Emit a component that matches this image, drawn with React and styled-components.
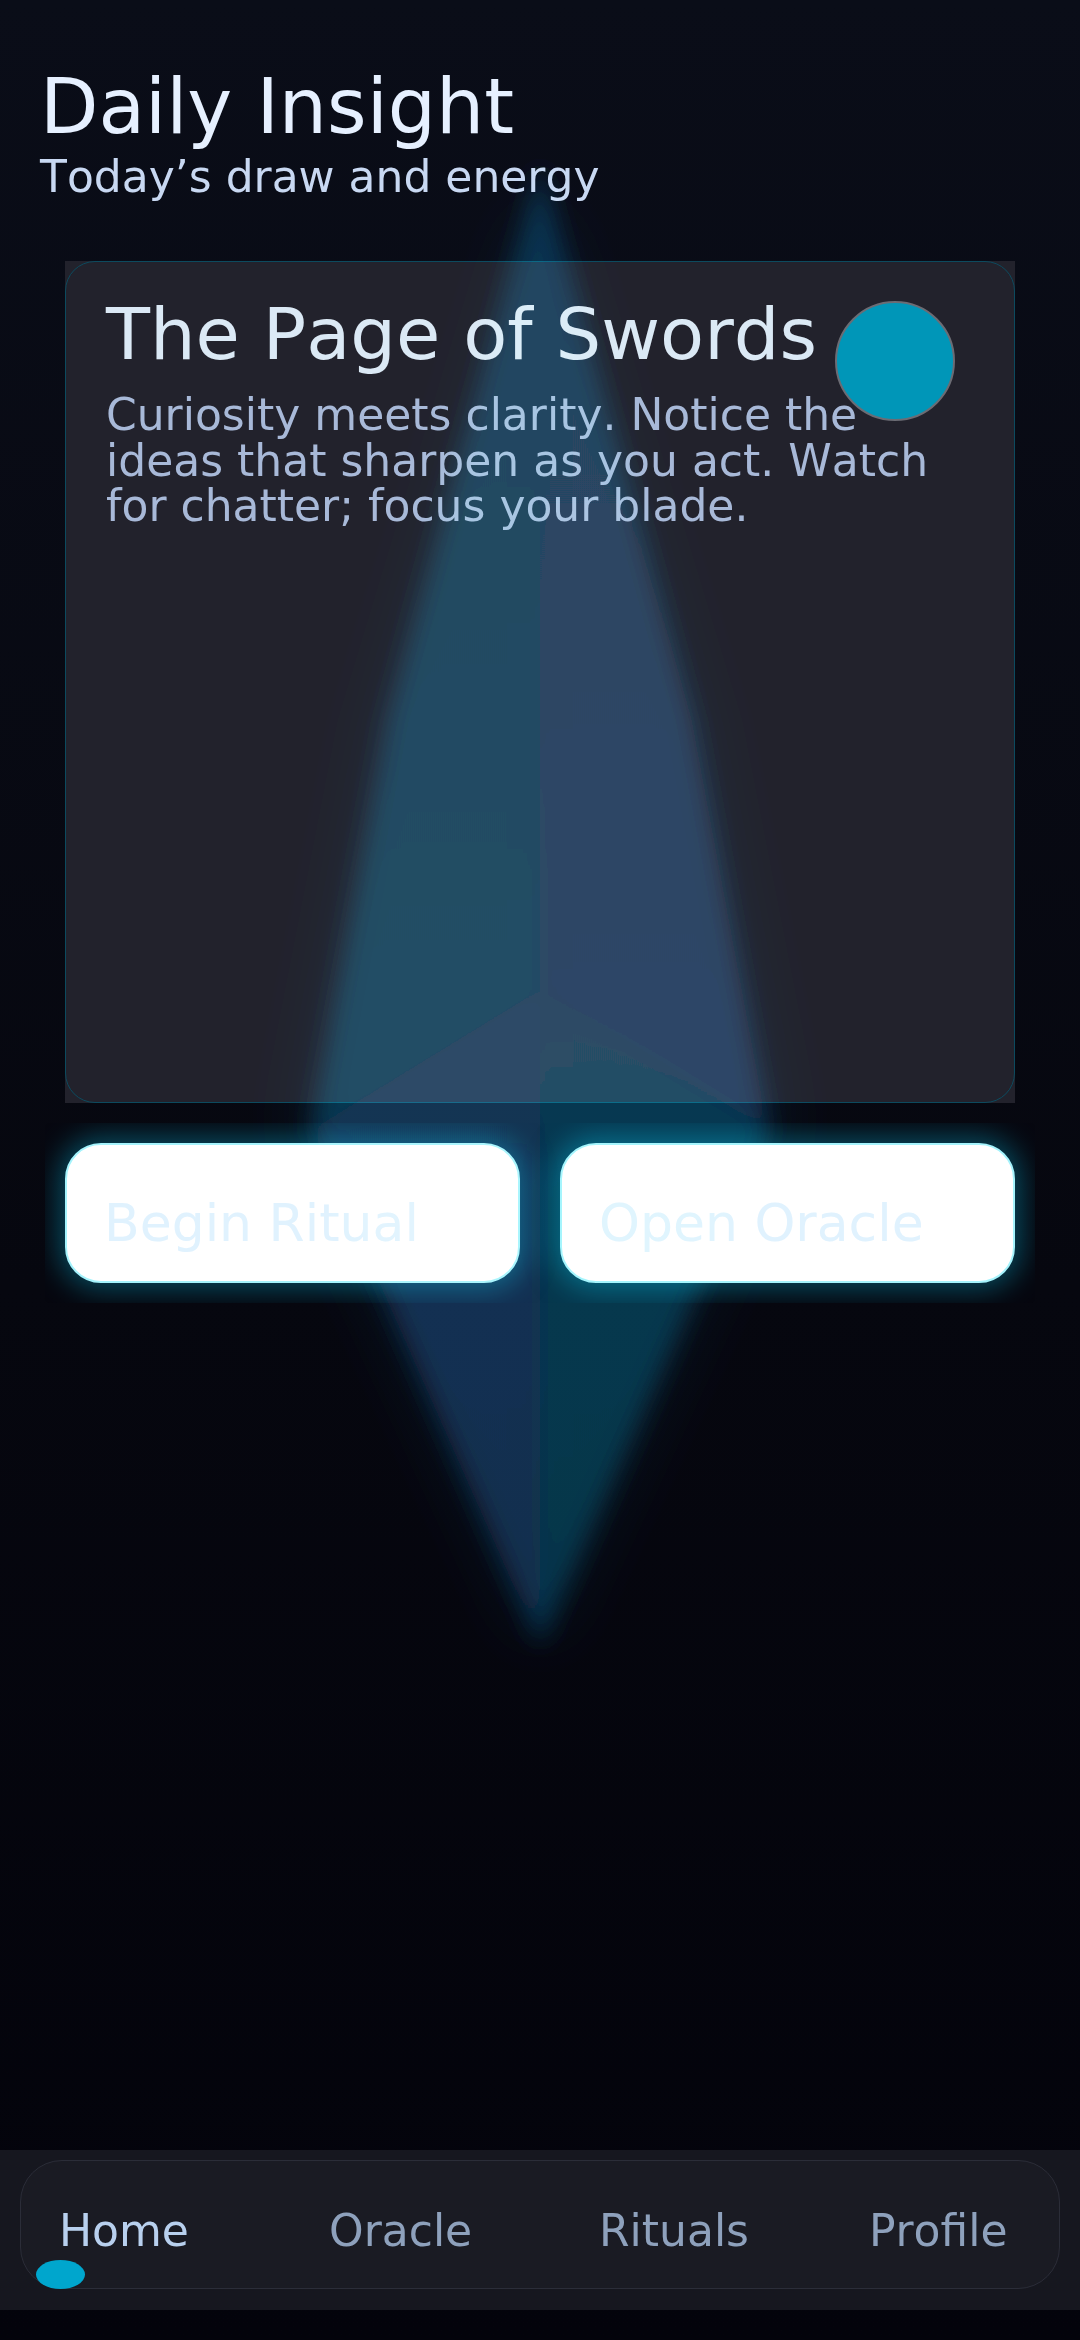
import React from 'react'
import styled, { createGlobalStyle } from 'styled-components'

const GlobalStyle = createGlobalStyle`
  html, body {
    margin: 0;
    padding: 0;
    background: #03030b;
  }
  * {
    box-sizing: border-box;
  }
`

const Page = styled.div`
  position: relative;
  min-height: 100vh;
  display: flex;
  flex-direction: column;
  background: linear-gradient(180deg, #0a0d18 0%, #06070f 55%, #03030b 100%);
  font-family: "DejaVu Sans", "Noto Sans", sans-serif;
  font-kerning: none;
`

const Header = styled.header`
  padding: 62px 40px 0;
`

const Title = styled.h1`
  margin: 0;
  font-size: 76px;
  font-weight: 400;
  line-height: normal;
  color: #e6f0ff;
`

const Subtitle = styled.p`
  margin: 0;
  font-size: 44px;
  line-height: normal;
  color: #c8d8f2;
`

const Main = styled.main`
  flex: 1;
  padding: 59px 65px 0;
`

const CardFrame = styled.section`
  height: 842px;
  background: #22222c;
`

const Card = styled.div`
  position: relative;
  height: 100%;
  padding: 30px 40px;
  border: 1px solid #0c4a5e;
  border-radius: 30px;
`

const CardTitle = styled.h2`
  margin: 0;
  font-size: 72px;
  font-weight: 400;
  line-height: normal;
  color: #dbe9f5;
`

const CardText = styled.p`
  margin: 16px 0 0;
  font-size: 44px;
  line-height: 45.5px;
  color: #a8b9d8;
`

const Orb = styled.div`
  position: absolute;
  top: 39px;
  right: 59px;
  width: 120px;
  height: 120px;
  border-radius: 50%;
  background: #0096b8;
  border: 2px solid #6b6c74;
`

const ButtonRow = styled.div`
  display: grid;
  grid-template-columns: 1fr 1fr;
  gap: 40px;
  margin: 20px -20px 0;
  padding: 20px;
  overflow: hidden;
`

const ActionButton = styled.button`
  display: flex;
  align-items: flex-start;
  justify-content: flex-start;
  height: 140px;
  padding: 48px 37px 0;
  border: 2px solid #a5f3fc;
  border-radius: 36px;
  background: #ffffff;
  color: #e0f2fe;
  font-family: inherit;
  font-size: 52px;
  font-kerning: none;
  line-height: normal;
  text-align: left;
  white-space: nowrap;
  box-shadow: 0 0 28px 6px rgba(8, 145, 178, 0.5);
  cursor: pointer;
`

const NavBar = styled.nav`
  margin-bottom: 30px;
  padding: 10px 20px 21px;
  background: #16171f;
`

const NavPill = styled.div`
  position: relative;
  display: grid;
  grid-template-columns: repeat(4, 1fr);
  column-gap: 118px;
  padding: 44px 38px 32px;
  border: 1px solid #2b2d38;
  border-radius: 42px;
  background: #1a1b23;
`

const NavItem = styled.span`
  font-size: 44px;
  line-height: normal;
  white-space: nowrap;
  color: ${(p) => (p.$active ? '#b8d0ee' : '#8ea1bc')};
`

const ActiveDot = styled.span`
  position: absolute;
  left: 15px;
  bottom: -1px;
  width: 49px;
  height: 29px;
  border-radius: 50%;
  background: #00a6cd;
`

const CrystalLayer = styled.svg`
  position: absolute;
  left: 200px;
  top: 80px;
  width: 680px;
  height: 1680px;
  pointer-events: none;
  mix-blend-mode: screen;
`

const Crystal = () => (
  <CrystalLayer viewBox="200 80 680 1680">
    <defs>
      <filter id="soft" x="-40%" y="-10%" width="180%" height="120%">
        <feGaussianBlur stdDeviation="12" />
      </filter>
      <filter id="halo" x="-60%" y="-20%" width="220%" height="140%">
        <feGaussianBlur stdDeviation="34" />
      </filter>
      <linearGradient id="ul" x1="0" y1="0" x2="0" y2="1">
        <stop offset="0" stopColor="#062a3e" />
        <stop offset="1" stopColor="#063245" />
      </linearGradient>
      <linearGradient id="ur" x1="0" y1="0" x2="0" y2="1">
        <stop offset="0" stopColor="#06283f" />
        <stop offset="1" stopColor="#082c47" />
      </linearGradient>
      <linearGradient id="ll" x1="0" y1="0" x2="0" y2="1">
        <stop offset="0" stopColor="#0a2f46" />
        <stop offset="0.35" stopColor="#0d2b47" />
        <stop offset="1" stopColor="#0c2a44" />
      </linearGradient>
      <linearGradient id="lr" x1="0" y1="0" x2="0" y2="1">
        <stop offset="0" stopColor="#072f45" />
        <stop offset="0.35" stopColor="#053243" />
        <stop offset="1" stopColor="#052f40" />
      </linearGradient>
    </defs>
    <polygon
      points="540,190 380,720 300,1130 540,1650 780,1130 700,720"
      fill="#0a2538"
      opacity="0.4"
      filter="url(#halo)"
    />
    <g filter="url(#soft)">
      <polygon points="540,165 388,720 312,1130 540,990" fill="url(#ul)" />
      <polygon points="540,165 540,990 768,1130 692,720" fill="url(#ur)" />
      <polygon points="312,1130 540,990 540,1645" fill="url(#ll)" />
      <polygon points="768,1130 540,990 540,1645" fill="url(#lr)" />
    </g>
  </CrystalLayer>
)

const navItems = ['Home', 'Oracle', 'Rituals', 'Profile']

const App = () => {
  return (
    <Page>
      <GlobalStyle />
      <Header>
        <Title>Daily Insight</Title>
        <Subtitle>Today’s draw and energy</Subtitle>
      </Header>
      <Main>
        <CardFrame>
          <Card>
            <CardTitle>The Page of Swords</CardTitle>
            <CardText>
              Curiosity meets clarity. Notice the ideas that sharpen as you act. Watch for chatter; focus your blade.
            </CardText>
            <Orb />
          </Card>
        </CardFrame>
        <ButtonRow>
          <ActionButton>Begin Ritual</ActionButton>
          <ActionButton>Open Oracle</ActionButton>
        </ButtonRow>
      </Main>
      <NavBar>
        <NavPill>
          {navItems.map((item, i) => (
            <NavItem key={item} $active={i === 0}>{item}</NavItem>
          ))}
          <ActiveDot />
        </NavPill>
      </NavBar>
      <Crystal />
    </Page>
  )
}

export default App
